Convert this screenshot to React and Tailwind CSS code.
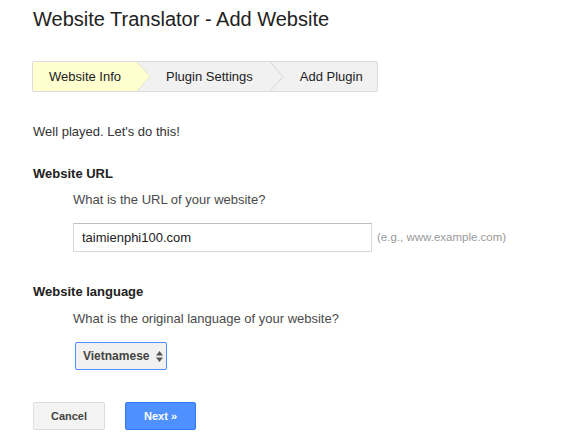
import React from 'react'

function Chevron({ filled }) {
  return (
    <svg width="15" height="29" viewBox="0 0 15 29" className="shrink-0 block">
      {filled && <polygon points="0,0 1,0 14,14.5 1,29 0,29" fill="#ffffd0" />}
      <polyline points="1,0 14,14.5 1,29" fill="none" stroke={filled ? '#e2e2c8' : '#d6d6d6'} strokeWidth="1" />
    </svg>
  )
}

function SelectArrows() {
  return (
    <svg width="7" height="11" viewBox="0 0 7 11" className="block">
      <polygon points="3.5,0 7,4.5 0,4.5" fill="#555" />
      <polygon points="0,6.5 7,6.5 3.5,11" fill="#555" />
    </svg>
  )
}

export default function App() {
  return (
    <div className="w-[574px] h-[448px] bg-white pl-[33px] text-[13px] text-[#333] overflow-hidden" style={{ fontFamily: '"Liberation Sans", Arial, sans-serif' }}>
      <h1 className="mt-[7px] text-[20px] leading-[24px] text-[#222] font-normal">Website Translator - Add Website</h1>

      <div className="mt-[30px] -ml-px w-[346px] h-[31px] flex items-stretch border border-[#dcdcdc] rounded-[2px] bg-[#f1f1f1] leading-[29px]">
        <div className="flex items-stretch bg-[#ffffd0]">
          <span className="pl-[16px] pr-[15px] text-[#222]">Website Info</span>
        </div>
        <Chevron filled />
        <span className="pl-[15px] pr-[16px] text-[#222]">Plugin Settings</span>
        <Chevron />
        <span className="pl-[16px] text-[#222]">Add Plugin</span>
      </div>

      <p className="mt-[32px] leading-[16px]">Well played. Let's do this!</p>

      <h2 className="mt-[26px] leading-[16px] font-bold text-[#222]">Website URL</h2>
      <div className="pl-[40px]">
        <p className="mt-[10px] leading-[16px] text-[#4a4a4a]">What is the URL of your website?</p>
        <div className="mt-[15px] flex items-center">
          <div className="w-[299px] h-[29px] border border-[#d9d9d9] border-t-[#c0c0c0] pl-[8px] leading-[27px] text-[#222] bg-white">
            taimienphi100.com
          </div>
          <span className="ml-[5px] text-[11.5px] text-[#999]">(e.g., www.example.com)</span>
        </div>
      </div>

      <h2 className="mt-[32px] leading-[16px] font-bold text-[#222]">Website language</h2>
      <div className="pl-[42px]">
        <p className="mt-[11px] -ml-[2px] leading-[16px] text-[#4a4a4a]">What is the original language of your website?</p>
        <div className="mt-[15px] w-[92px] h-[28px] border border-[#4d90fe] rounded-[2px] bg-[#f1f1f1] flex items-center pl-[7px]">
          <span className="text-[12px] font-bold text-[#444]">Vietnamese</span>
          <span className="ml-[6px]"><SelectArrows /></span>
        </div>
      </div>

      <div className="mt-[32px] flex gap-[20px]">
        <button className="w-[72px] h-[28px] border border-[#dcdcdc] rounded-[2px] bg-[#f3f3f3] text-[11px] font-bold text-[#444]">Cancel</button>
        <button className="w-[71px] h-[28px] border border-[#3079ed] rounded-[2px] bg-[#4d90fe] text-[11px] font-bold text-white">Next »</button>
      </div>
    </div>
  )
}
